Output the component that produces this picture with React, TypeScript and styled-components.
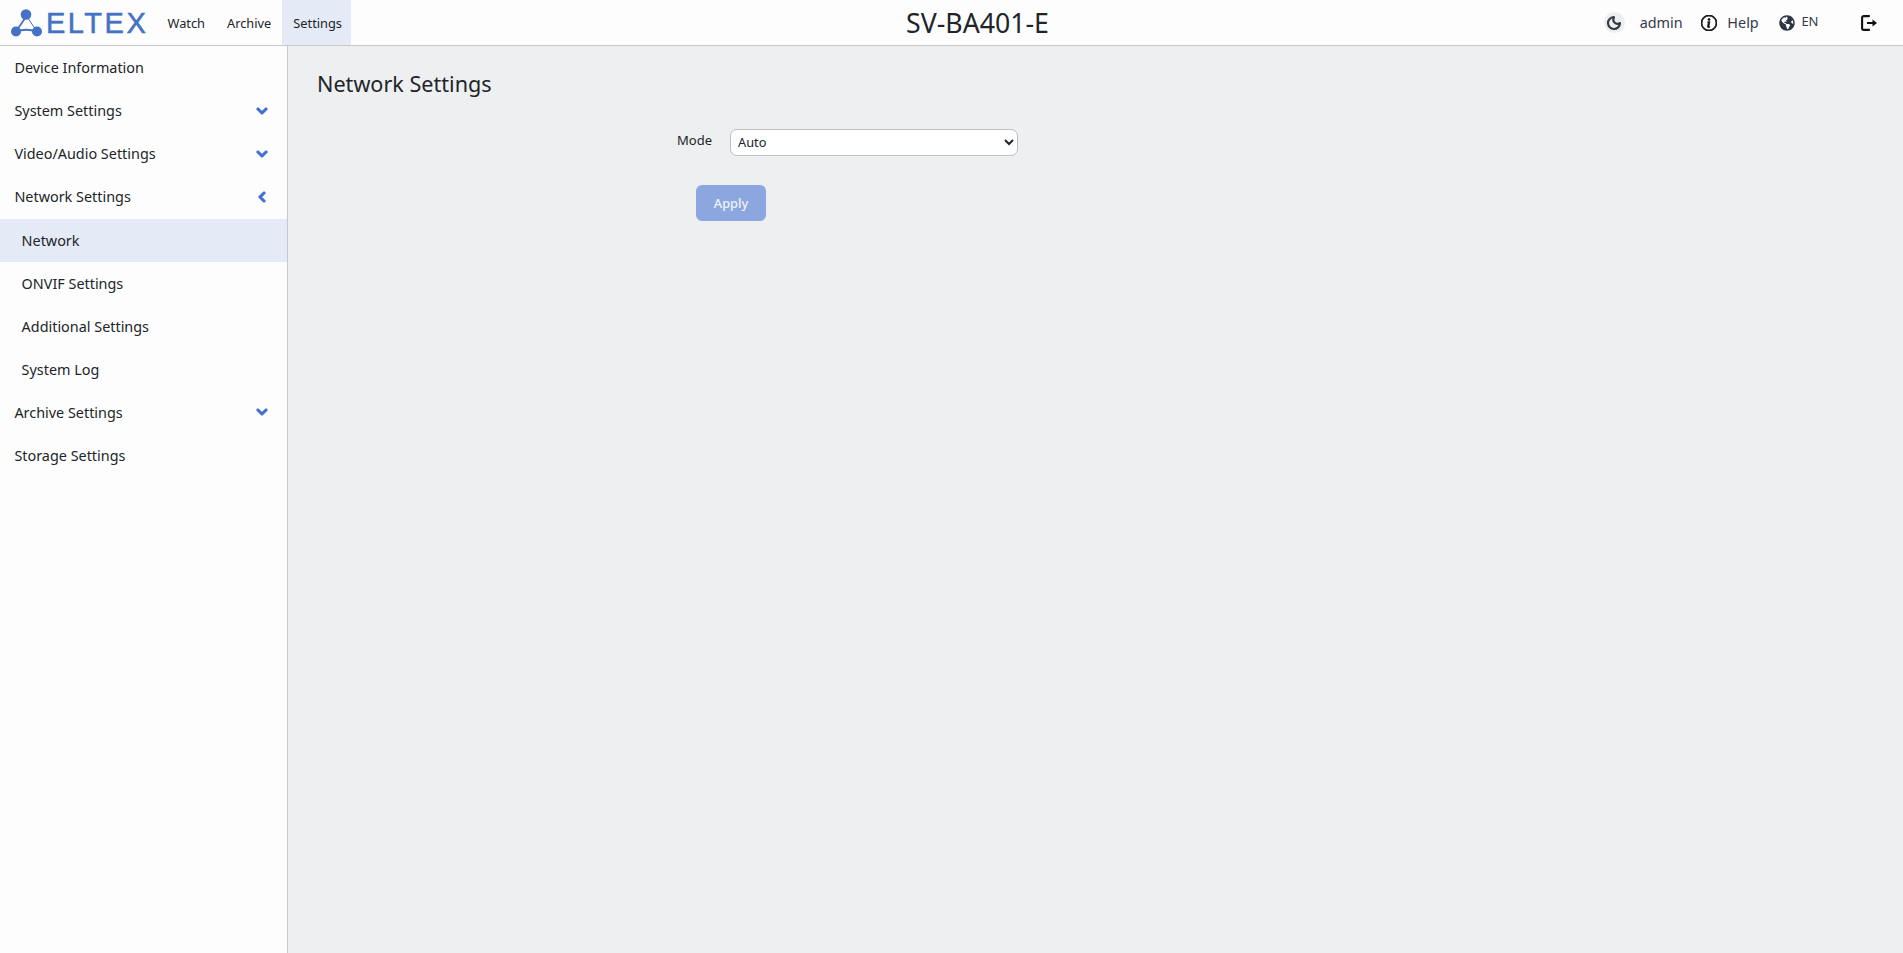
import React from 'react';
import styled, { createGlobalStyle } from 'styled-components';
import { FaChevronDown, FaChevronLeft, FaGlobeAmericas } from 'react-icons/fa';
import { BsInfoCircle } from 'react-icons/bs';
import { Moon } from 'lucide-react';

const GlobalStyle = createGlobalStyle`
  html, body {
    margin: 0;
    padding: 0;
    height: 100%;
    background: #eeeff1;
    font-family: "Noto Sans", "Open Sans", sans-serif;
    color: #212529;
  }
  #root { height: 100%; }
`;

const Page = styled.div`
  display: flex;
  flex-direction: column;
  height: 953px;
  overflow: hidden;
`;

const Header = styled.header`
  display: grid;
  grid-template-columns: 1fr auto 1fr;
  align-items: stretch;
  height: 45px;
  background: #fdfdfd;
  border-bottom: 1px solid #c6c8cc;
  flex: none;
`;

const HeaderLeft = styled.div`
  display: flex;
  align-items: stretch;
`;

const Logo = styled.div`
  display: flex;
  align-items: center;
  width: 156.5px;
  padding-left: 10px;
  box-sizing: border-box;
  flex: none;
`;

const LogoText = styled.span`
  font-family: "Liberation Sans", sans-serif;
  font-size: 29px;
  letter-spacing: 2.5px;
  -webkit-text-stroke: 0.5px #4472c4;
  color: #4472c4;
  margin: 2px 0 0 3px;
`;

const NavItem = styled.a<{ $active?: boolean }>`
  display: flex;
  align-items: center;
  padding: 0 ${(p) => (p.$active ? '9.5px' : '11px')} 0 11px;
  font-size: 12.8px;
  color: #212529;
  background: ${(p) => (p.$active ? '#e5ebf6' : 'transparent')};
`;

const Title = styled.div`
  display: flex;
  align-items: center;
  font-size: 26.7px;
  color: #212529;
  padding-left: 52px;
`;

const HeaderRight = styled.div`
  display: flex;
  align-items: center;
  justify-content: flex-end;
  padding-right: 26px;
  font-size: 14.4px;
  color: #343a48;
`;

const ThemeButton = styled.span`
  display: flex;
  align-items: center;
  justify-content: center;
  width: 21px;
  height: 21px;
  border-radius: 50%;
  background: #eceef1;
  color: #343a40;
  margin-right: 15px;
`;

const Help = styled.span`
  display: flex;
  align-items: center;
  gap: 10.7px;
  margin-left: 18px;
`;

const Lang = styled.span`
  display: flex;
  align-items: center;
  gap: 6.7px;
  margin-left: 20px;
  font-size: 13px;
`;

const LangText = styled.span`
  position: relative;
  top: -2px;
`;

const Logout = styled.svg`
  margin-left: 42.5px;
  display: block;
`;

const Body = styled.div`
  display: flex;
  flex: 1;
  min-height: 0;
`;

const Sidebar = styled.nav`
  width: 287px;
  flex: none;
  padding-top: 0.15px;
  background: #fdfdfd;
  border-right: 1px solid #c6c8cc;
`;

const MenuItem = styled.a<{ $active?: boolean; $sub?: boolean }>`
  display: flex;
  align-items: center;
  justify-content: space-between;
  height: 43.1px;
  padding: 0 19px 0 ${(p) => (p.$sub ? '21.6px' : '14.4px')};
  font-size: 14.4px;
  color: #212529;
  background: ${(p) => (p.$active ? '#e5ebf6' : 'transparent')};
  svg {
    color: #3f6fd0;
    font-size: 12px;
    stroke: currentColor;
    stroke-width: 50;
  }
`;

const Content = styled.main`
  flex: 1;
  padding: 21px 29px;
`;

const Heading = styled.h1`
  margin: 0;
  font-size: 21.6px;
  font-weight: 400;
  line-height: 34px;
  color: #212529;
`;

const Form = styled.form`
  margin-top: 28px;
  width: 720px;
`;

const FormRow = styled.div`
  display: flex;
  align-items: center;
  height: 26px;
`;

const Label = styled.label`
  width: 413px;
  padding-right: 18px;
  box-sizing: border-box;
  text-align: right;
  font-size: 13px;
  position: relative;
  top: -2px;
`;

const Select = styled.select`
  width: 288px;
  height: 27px;
  box-sizing: border-box;
  border: 1px solid #bdbfc4;
  border-radius: 7px;
  background-color: #fff;
  padding: 0 3px;
  font-family: inherit;
  font-size: 12.8px;
  color: #212529;
`;

const ApplyButton = styled.button`
  display: block;
  margin: 30px 0 0 379px;
  width: 70px;
  height: 36px;
  border: none;
  border-radius: 6px;
  background: #8ca7df;
  color: #f0f3fa;
  font-family: inherit;
  font-size: 12.8px;
  font-weight: 500;
`;

const menu = [
  { label: 'Device Information' },
  { label: 'System Settings', icon: 'down' },
  { label: 'Video/Audio Settings', icon: 'down' },
  { label: 'Network Settings', icon: 'left' },
  { label: 'Network', sub: true, active: true },
  { label: 'ONVIF Settings', sub: true },
  { label: 'Additional Settings', sub: true },
  { label: 'System Log', sub: true },
  { label: 'Archive Settings', icon: 'down' },
  { label: 'Storage Settings' },
];

const LogoMark = () => (
  <svg width="33" height="30" viewBox="0 0 33 30">
    <path d="M16.5 8 L6 23.5 Q16 20 27 23.5" stroke="#4472c4" strokeWidth="1.8" fill="none" />
    <path d="M16.5 8 L27 23.5" stroke="#4472c4" strokeWidth="1" fill="none" />
    <circle cx="16" cy="6.5" r="5.3" fill="#4472c4" />
    <circle cx="6" cy="23.5" r="5" fill="#4472c4" />
    <circle cx="27" cy="23.5" r="5" fill="#4472c4" />
  </svg>
);

export default function App() {
  return (
    <Page>
      <GlobalStyle />
      <Header>
        <HeaderLeft>
          <Logo>
            <LogoMark />
            <LogoText>ELTEX</LogoText>
          </Logo>
          <NavItem>Watch</NavItem>
          <NavItem>Archive</NavItem>
          <NavItem $active>Settings</NavItem>
        </HeaderLeft>
        <Title>SV-BA401-E</Title>
        <HeaderRight>
          <ThemeButton>
            <Moon size={16} strokeWidth={3.2} />
          </ThemeButton>
          <span>admin</span>
          <Help>
            <BsInfoCircle size={16} color="#111" stroke="#111" strokeWidth={0.8} />
            <span>Help</span>
          </Help>
          <Lang>
            <FaGlobeAmericas size={16} color="#2f3542" />
            <LangText>EN</LangText>
          </Lang>
          <Logout width="16" height="16" viewBox="0 0 16 16">
            <path d="M8 1.1H2.8A1.7 1.7 0 0 0 1.1 2.8v10.4a1.7 1.7 0 0 0 1.7 1.7H8" fill="none" stroke="#111" strokeWidth="2.1" strokeLinecap="round" />
            <path d="M6 7h5.5V4.4L16 8l-4.5 3.6V9H6z" fill="#111" />
          </Logout>
        </HeaderRight>
      </Header>
      <Body>
        <Sidebar>
          {menu.map((item) => (
            <MenuItem key={item.label} $sub={item.sub} $active={item.active}>
              {item.label}
              {item.icon === 'down' && <FaChevronDown />}
              {item.icon === 'left' && <FaChevronLeft />}
            </MenuItem>
          ))}
        </Sidebar>
        <Content>
          <Heading>Network Settings</Heading>
          <Form>
            <FormRow>
              <Label>Mode</Label>
              <Select defaultValue="Auto">
                <option>Auto</option>
              </Select>
            </FormRow>
            <ApplyButton type="button">Apply</ApplyButton>
          </Form>
        </Content>
      </Body>
    </Page>
  );
}
